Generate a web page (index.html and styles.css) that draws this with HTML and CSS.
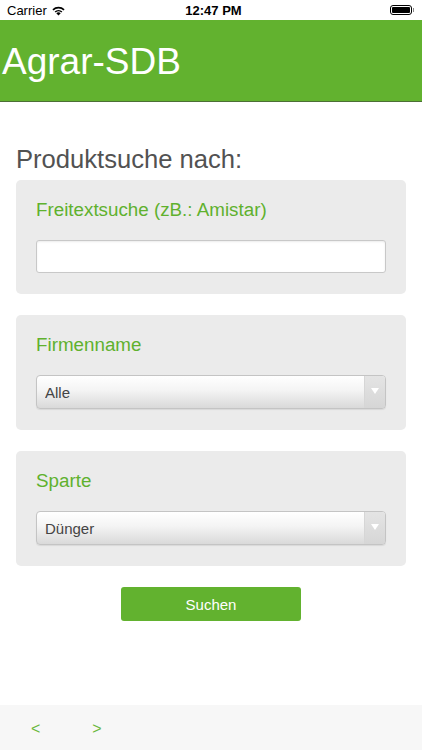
FILE: index.html
```html
<!DOCTYPE html>
<html lang="de">
<head>
    <meta charset="UTF-8">
    <meta name="viewport" content="width=device-width, initial-scale=1.0">
    <title>Agrar-SDB</title>
    <link rel="stylesheet" href="styles.css">
</head>
<body>
    <div class="screen">
        <!-- iOS status bar -->
        <div class="status-bar">
            <div class="status-left">
                <span>Carrier</span>
                <svg class="wifi" width="15" height="11" viewBox="0 0 15 11">
                    <path d="M7.5 10.6 L5.3 8.2 A3.2 3.2 0 0 1 9.7 8.2 Z" fill="#000"/>
                    <path d="M3.6 6.5 A5.6 5.6 0 0 1 11.4 6.5 L10.3 7.6 A4.1 4.1 0 0 0 4.7 7.6 Z" fill="#000"/>
                    <path d="M1.4 4.3 A8.8 8.8 0 0 1 13.6 4.3 L12.5 5.4 A7.2 7.2 0 0 0 2.5 5.4 Z" fill="#000"/>
                </svg>
            </div>
            <div class="status-time">12:47 PM</div>
            <div class="status-right">
                <div class="battery"><div class="battery-level"></div></div>
                <div class="battery-cap"></div>
            </div>
        </div>

        <!-- App header -->
        <header class="app-header">
            <h1>Agrar-SDB</h1>
        </header>

        <main class="content">
            <h2 class="page-title">Produktsuche nach:</h2>

            <div class="card">
                <label class="card-label" for="freetext">Freitextsuche (zB.: Amistar)</label>
                <input type="text" id="freetext" class="text-input">
            </div>

            <div class="card">
                <label class="card-label" for="company">Firmenname</label>
                <div class="select-box">
                    <select id="company">
                        <option>Alle</option>
                    </select>
                    <div class="select-arrow"></div>
                </div>
            </div>

            <div class="card">
                <label class="card-label" for="branch">Sparte</label>
                <div class="select-box">
                    <select id="branch">
                        <option>Dünger</option>
                    </select>
                    <div class="select-arrow"></div>
                </div>
            </div>

            <div class="actions">
                <button class="search-btn">Suchen</button>
            </div>
        </main>

        <!-- Bottom toolbar -->
        <footer class="toolbar">
            <button class="nav-btn">&lt;</button>
            <button class="nav-btn">&gt;</button>
        </footer>
    </div>
</body>
</html>
```

FILE: styles.css
```css
* { margin: 0; padding: 0; box-sizing: border-box; }

body {
    font-family: "Liberation Sans", Arial, sans-serif;
    background: #fff;
}

.screen {
    display: flex;
    flex-direction: column;
    height: 750px;
}

/* status bar */
.status-bar {
    height: 20px;
    display: flex;
    align-items: center;
    justify-content: space-between;
    padding: 0 8px 0 7px;
    font-size: 13px;
    color: #000;
}

.status-left {
    display: flex;
    align-items: center;
    gap: 4px;
    width: 100px;
}

.status-time {
    font-weight: bold;
    font-size: 13px;
    margin-left: 6px;
}

.status-right {
    display: flex;
    align-items: center;
    justify-content: flex-end;
    width: 100px;
}

.battery {
    width: 22px;
    height: 10px;
    border: 1px solid #000;
    border-radius: 3px;
    padding: 1px;
}

.battery-level {
    width: 100%;
    height: 100%;
    background: #000;
    border-radius: 1px;
}

.battery-cap {
    width: 1.5px;
    height: 4px;
    background: #888;
    margin-left: 1px;
}

/* header */
.app-header {
    height: 82px;
    background: #62b22f;
    border-bottom: 1px solid #4c6f36;
    display: flex;
    align-items: center;
    padding-left: 2px;
}

.app-header h1 {
    color: #fff;
    font-size: 37px;
    font-weight: normal;
    line-height: 40px;
    margin-top: 2px;
}

/* content */
.content {
    flex: 1;
    padding: 42px 16px 0;
}

.page-title {
    font-size: 25.6px;
    font-weight: normal;
    line-height: 30px;
    color: #525252;
    margin-bottom: 6px;
}

.card {
    background: #ebebeb;
    border-radius: 5px;
    padding: 19px 20px 21px;
    margin-bottom: 21px;
}

.card-label {
    display: block;
    color: #5fb12e;
    font-size: 18.8px;
    line-height: 22px;
    margin-bottom: 19px;
}

.text-input {
    width: 100%;
    height: 33px;
    border: 1px solid #c8c8c8;
    border-radius: 3px;
    background: #fff;
    box-shadow: inset 0 1px 2px rgba(0,0,0,0.08);
    font-size: 15px;
    padding: 0 8px;
}

.select-box {
    display: flex;
    height: 34px;
    border: 1px solid #c4c4c4;
    border-radius: 4px;
    background: linear-gradient(#ffffff 0%, #f4f4f4 45%, #d9d9d9 100%);
    box-shadow: 0 1px 1px rgba(0,0,0,0.08);
    overflow: hidden;
}

.select-box select {
    flex: 1;
    appearance: none;
    -webkit-appearance: none;
    border: none;
    background: transparent;
    font-family: "Liberation Sans", Arial, sans-serif;
    font-size: 15px;
    color: #444;
    padding: 0 8px;
    outline: none;
}

.select-arrow {
    width: 21px;
    border-left: 1px solid #d6d6d6;
    background: linear-gradient(#e4e4e4, #d6d6d6);
    display: flex;
    align-items: center;
    justify-content: center;
}

.select-arrow::after {
    content: "";
    border-left: 4px solid transparent;
    border-right: 4px solid transparent;
    border-top: 6px solid #fff;
    margin-top: -2px;
}

.actions {
    display: flex;
    justify-content: center;
}

.search-btn {
    width: 180px;
    height: 34px;
    background: #62b22f;
    color: #fff;
    border: none;
    border-radius: 3px;
    font-family: "Liberation Sans", Arial, sans-serif;
    font-size: 15px;
    cursor: pointer;
}

/* bottom toolbar */
.toolbar {
    height: 45px;
    background: #f7f7f7;
    display: flex;
    align-items: center;
    padding: 2px 0 0 31px;
    gap: 52px;
}

.nav-btn {
    background: none;
    border: none;
    color: #6ab83e;
    font-family: "Liberation Sans", Arial, sans-serif;
    font-size: 16px;
    cursor: pointer;
}
```
